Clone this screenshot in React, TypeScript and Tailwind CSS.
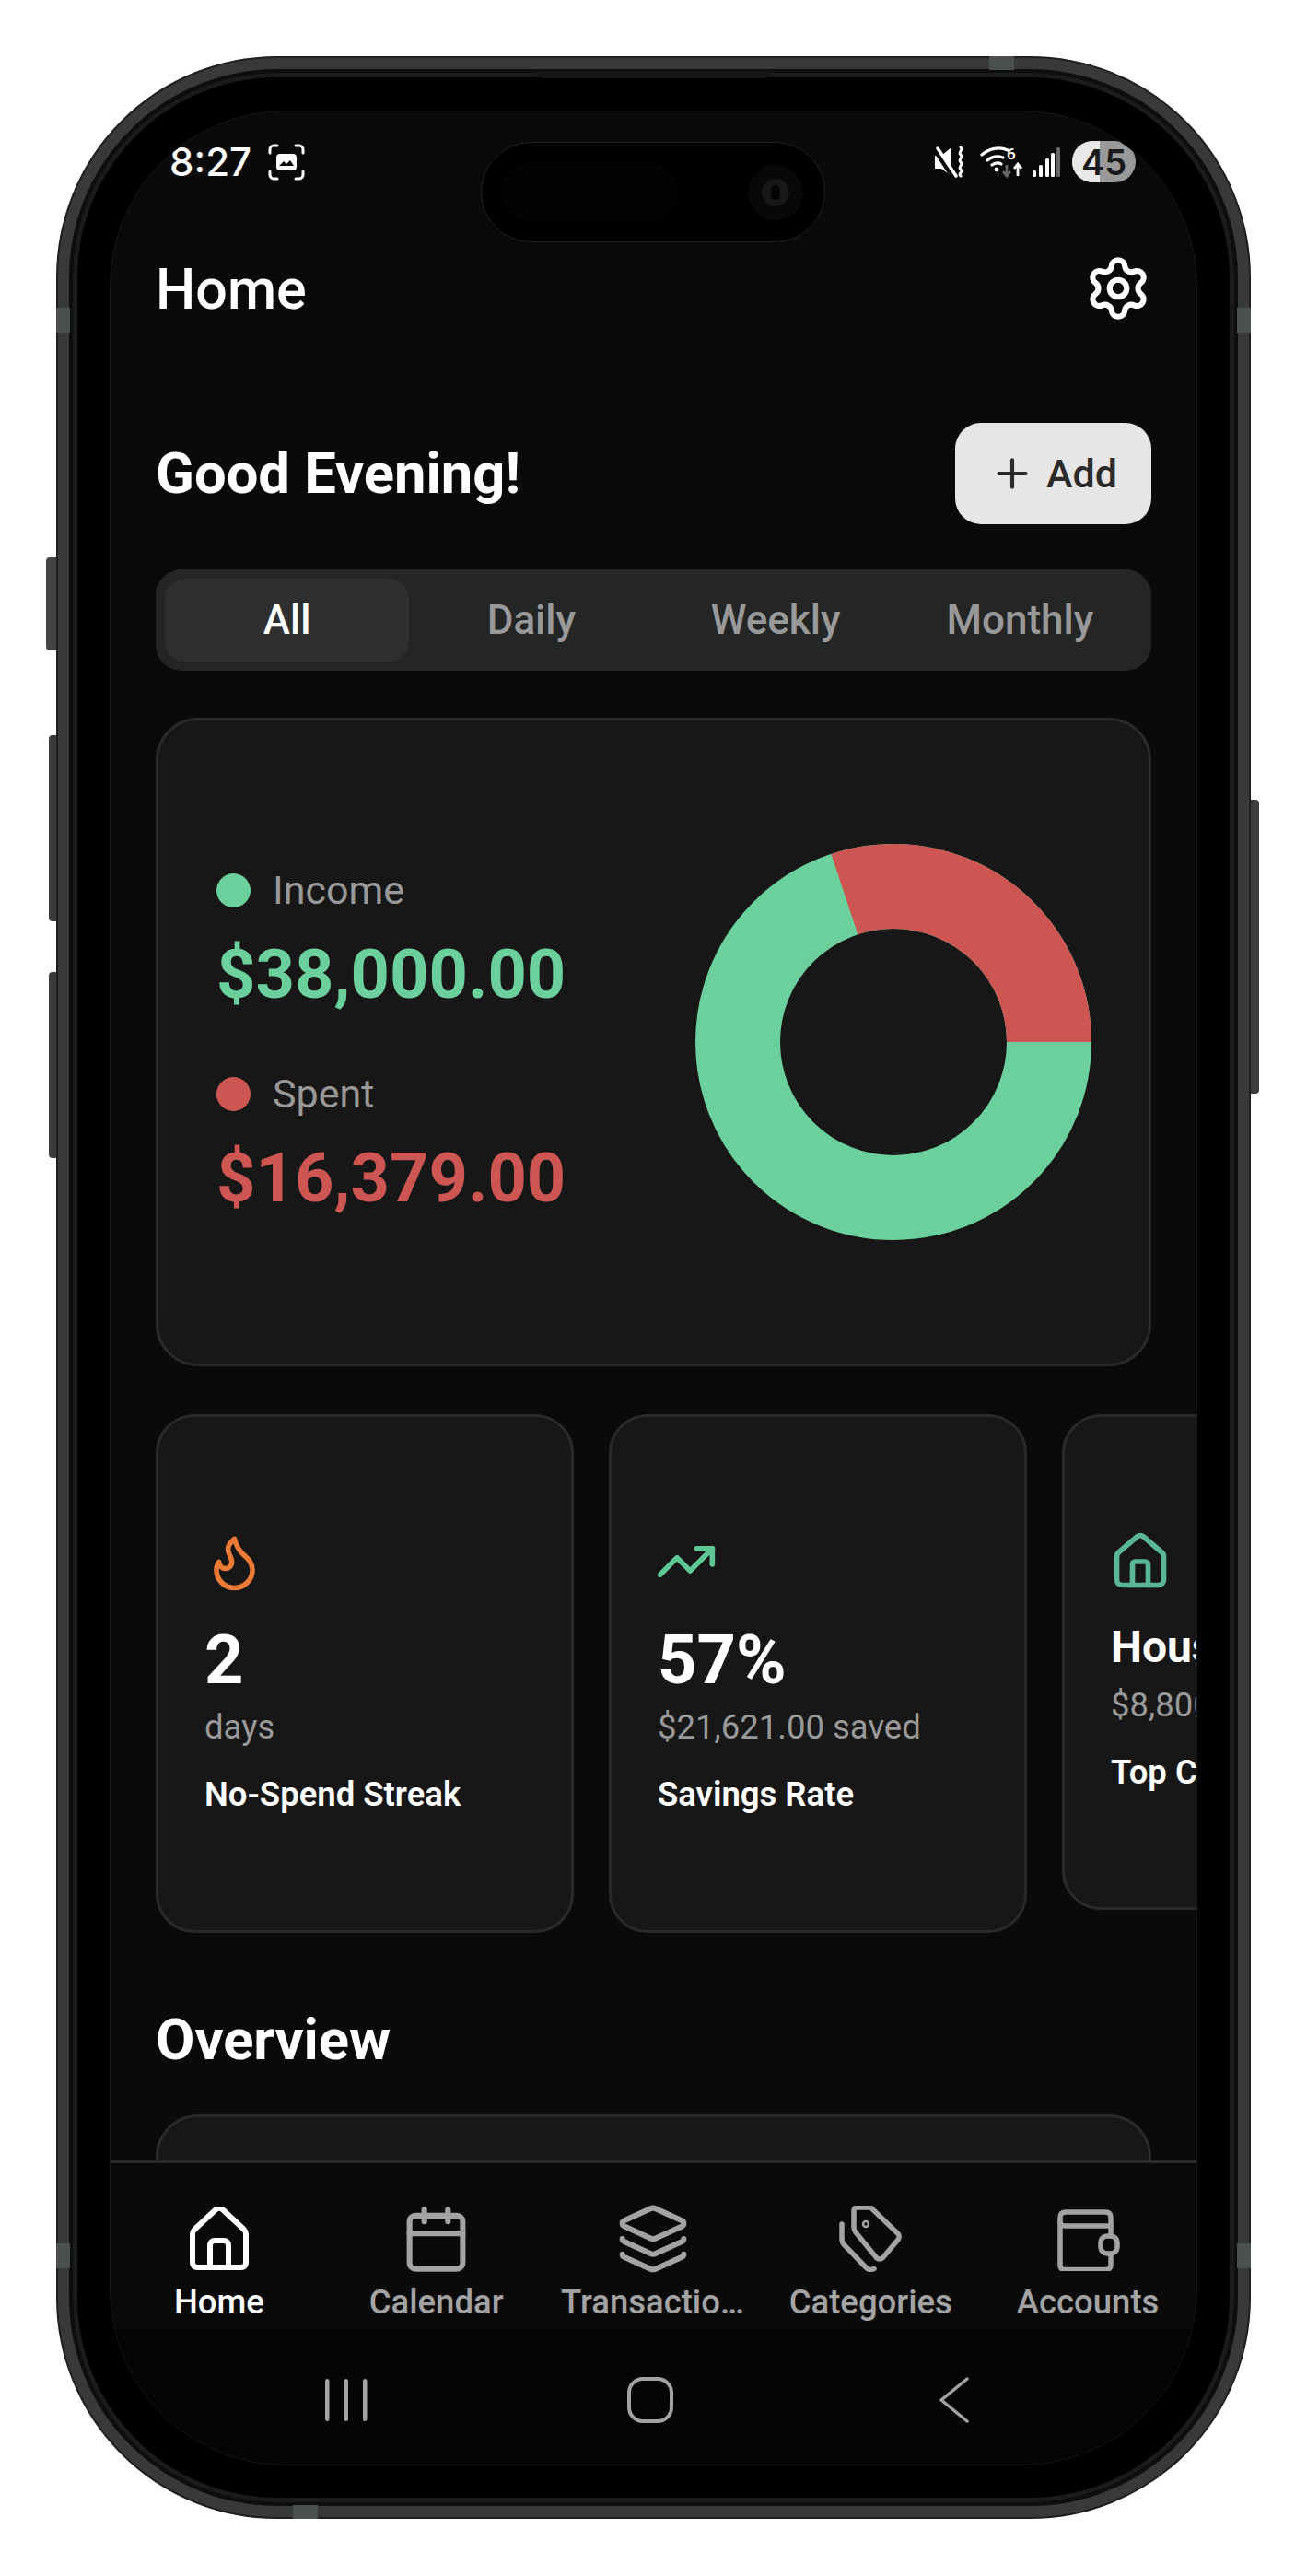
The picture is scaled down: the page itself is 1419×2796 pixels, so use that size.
import { Calendar, Flame, House, Layers, Plus, Settings, TrendingUp } from "lucide-react";
import type { ReactNode } from "react";

const tabs = ["All", "Daily", "Weekly", "Monthly"];

function StatusIcons() {
  return (
    <div className="flex items-center">
      {/* muted + vibrate */}
      <svg width="32" height="34" viewBox="0 0 32 34" fill="none" className="mr-[17px]">
        <path d="M0 10h7l11-9v31L7 24H0z" fill="#fff" />
        <path d="M-1 0l21 32" stroke="#0a0a0a" strokeWidth="7" />
        <path d="M3 2l20 30" stroke="#fff" strokeWidth="3.500" strokeLinecap="round" />
        <path d="M28 1c3.500 3-3.500 5 0 8s-3.500 5 0 8-3.500 5 0 8-3.500 4 0 7" stroke="#fff" strokeWidth="3" strokeLinecap="round" />
      </svg>
      {/* wifi */}
      <svg width="46" height="36" viewBox="0 0 46 36" fill="none" className="mr-[11px]">
        <path d="M2 10c8-7 19-9 28-5" stroke="#fff" strokeWidth="3.200" strokeLinecap="round" />
        <path d="M8 16c5-4 11-5 17-3" stroke="#fff" strokeWidth="3.200" strokeLinecap="round" />
        <path d="M13 21c3-2 7-3 10-1" stroke="#fff" strokeWidth="3.200" strokeLinecap="round" />
        <circle cx="18" cy="26" r="2.400" fill="#fff" />
        <text x="29" y="15" fontSize="17" fontWeight="600" fill="#fff" fontFamily="Roboto, sans-serif">6</text>
        <path d="M29 21v11m-4-4 4 5 4-5" stroke="#666" strokeWidth="2.800" />
        <path d="M41 33V21m-4 4 4-5 4 5" stroke="#fff" strokeWidth="2.800" />
      </svg>
      {/* signal */}
      <svg width="30" height="32" viewBox="0 0 30 32" className="mr-[13px]">
        <rect x="0" y="25" width="4" height="7" rx="1.500" fill="#fff" />
        <rect x="7" y="19" width="4" height="13" rx="1.500" fill="#fff" />
        <rect x="14" y="12" width="4" height="20" rx="1.500" fill="#fff" />
        <rect x="20" y="6" width="4" height="26" rx="1.500" fill="#fff" />
        <rect x="26" y="0" width="4" height="32" rx="1.500" fill="#666" />
      </svg>
      {/* battery */}
      <div className="relative flex h-[45px] w-[69px] items-center justify-center overflow-hidden rounded-full bg-[#999]">
        <div className="absolute inset-y-0 left-0 w-[30px] bg-[#e8e8e8]" />
        <span className="relative [font-family:Inter,sans-serif] text-[38px] leading-none font-semibold text-[#1a1a1a]">45</span>
      </div>
    </div>
  );
}

function Cutout() {
  return (
    <div className="absolute top-[33px] left-[402px] flex h-[109px] w-[374px] items-center rounded-full border border-[#222] bg-black">
      <div className="ml-[22px] h-[65px] w-[192px] rounded-full bg-[#030303]" />
      <div className="ml-[75px] flex h-[60px] w-[60px] items-center justify-center rounded-full bg-[#080808]">
        <div className="h-[30px] w-[30px] rounded-full bg-[#181818] pt-[7px]">
          <div className="mx-auto h-[16px] w-[10px] rounded-full bg-[#050505]" />
        </div>
      </div>
    </div>
  );
}

function Donut() {
  const r = 169;
  const c = 2 * Math.PI * r;
  const spent = (16379 / (38000 + 16379)) * c;
  return (
    <svg width="430" height="430" viewBox="0 0 430 430" className="shrink-0">
      <circle cx="215" cy="215" r={r} fill="none" stroke="#6cd09d" strokeWidth="92" />
      <circle
        cx="215"
        cy="215"
        r={r}
        fill="none"
        stroke="#cd5653"
        strokeWidth="92"
        strokeDasharray={`${spent} ${c - spent}`}
        strokeDashoffset={spent}
      />
    </svg>
  );
}

function LegendRow({ label, value, dot, text }: { label: string; value: string; dot: string; text: string }) {
  return (
    <div>
      <div className="flex h-[50px] items-center">
        <span className={`h-[37px] w-[37px] rounded-full ${dot}`} />
        <span className="ml-[24px] text-[43px] text-[#999]">{label}</span>
      </div>
      <div className={`mt-[25px] text-[74px] leading-[84px] font-bold ${text}`}>{value}</div>
    </div>
  );
}

function StatCard({
  icon,
  value,
  sub,
  label,
  className,
  valueClass,
}: {
  icon: ReactNode;
  value: string;
  sub: string;
  label: string;
  className: string;
  valueClass: string;
}) {
  return (
    <div className={`w-[454px] shrink-0 overflow-hidden rounded-[42px] border-[3px] border-[#2a2a2a] bg-[#171717] pt-[122px] pl-[50px] ${className}`}>
      <div className="flex h-[70px] items-center">{icon}</div>
      <div className={`font-bold whitespace-nowrap text-white ${valueClass}`}>{value}</div>
      <div className="text-[36.500px] leading-[50px] whitespace-nowrap text-[#999]">{sub}</div>
      <div className="mt-[26px] text-[36.500px] leading-[44px] font-semibold whitespace-nowrap text-white">{label}</div>
    </div>
  );
}

function HomeIcon() {
  return (
    <svg width="70" height="70" viewBox="0 0 70 70" fill="none" stroke="#fff" strokeWidth="6" strokeLinejoin="round" strokeLinecap="round">
      <path d="M6 30c0-2 .6-3.600 2-5L31 3.500c2.200-2 5.800-2 8 0L62 25c1.400 1.400 2 3 2 5v31c0 3-2 5-5 5H11c-3 0-5-2-5-5z" />
      <path d="M25 66V42c0-3 2-5 5-5h10c3 0 5 2 5 5v24" />
    </svg>
  );
}

function TagsIcon() {
  return (
    <svg width="72" height="72" viewBox="0 0 72 72" fill="none" stroke="#a3a3a3" strokeWidth="5.500" strokeLinejoin="round" strokeLinecap="round">
      <path d="M18 5c0-1.800 1.500-3 3-3h13c2 0 3.500 .8 4.700 2.200l27 26c1.800 2 1.800 5 0 7L50 56c-2 2.500-5.500 2.500-7.500 .5L20 29c-1.300-1.500-2-3.500-2-5.500z" />
      <circle cx="31" cy="20" r="3" strokeWidth="2.500" />
      <path d="M5 20v16c0 2.500 1 5 2.500 6.500L31 67c2.500 2.500 6 3 9 1.500" />
    </svg>
  );
}

function WalletIcon() {
  return (
    <svg width="70" height="70" viewBox="0 0 70 70" fill="none" stroke="#a3a3a3" strokeWidth="5.500" strokeLinejoin="round" strokeLinecap="round">
      <path d="M60 32V12c0-4-2-6-6-6H11C7 6 5 8 5 12v52c0 2.500 2 4.500 4.500 4.500H55c3 0 5-2 5-5V51" />
      <path d="M5 17c0 3 2 4 5 4h50" />
      <rect x="49" y="32" width="18" height="19" rx="7" />
    </svg>
  );
}

function NavItem({ icon, label, active }: { icon: ReactNode; label: string; active?: boolean }) {
  return (
    <div className="flex w-[235.8px] flex-col items-center">
      <div className="flex h-[72px] items-center justify-center">{icon}</div>
      <div
        className={`mt-[9px] w-[201px] truncate text-center text-[36.500px] leading-[48px] font-medium ${active ? "text-white" : "text-[#a3a3a3]"}`}
      >
        {label}
      </div>
    </div>
  );
}

function Band({ className }: { className: string }) {
  return <div className={`absolute bg-[#4a5050] ${className}`} />;
}

export default function App() {
  return (
    <div className="relative h-[2796px] w-[1419px] overflow-hidden bg-white pt-[61px] pl-[61px] [font-family:Roboto,sans-serif]">
      <div className="relative h-[2673px] w-[1297px]">
        {/* side buttons */}
        <div className="absolute top-[544px] left-[-11px] h-[101px] w-[14px] rounded-l-[4px] bg-[#444]" />
        <div className="absolute top-[737px] left-[-8px] h-[202px] w-[10px] rounded-l-[4px] bg-[#3c3c3c]" />
        <div className="absolute top-[994px] left-[-8px] h-[202px] w-[10px] rounded-l-[4px] bg-[#3c3c3c]" />
        <div className="absolute top-[807px] right-[-9px] h-[319px] w-[11px] rounded-r-[4px] bg-[#3c3c3c]" />

        {/* body */}
        <div className="relative h-full rounded-[240px] border-2 border-[#1e1f1f] bg-[#383a3a] p-[12px]">
          <div className="h-full rounded-[226px] border-4 border-[#0e0e0e] bg-black px-[41px] pt-[42px] shadow-[inset_0_0_0_5px_#1b1b1b]">
            <div className="relative flex h-[2554px] w-[1179px] flex-col overflow-hidden rounded-[190px] bg-[#0a0a0a] outline outline-[#1a1a1a]">
              <Cutout />

              <div className="flex h-[150px] items-start justify-between pt-[32px] pr-[66px] pl-[64px]">
                <div className="flex h-[45px] items-center">
                  <span className="[font-family:Inter,sans-serif] text-[42px] leading-none font-medium text-white">8:27</span>
                  <svg width="40" height="40" viewBox="0 0 40 40" fill="none" className="ml-[18px]">
                    <path d="M2 10V6c0-2 2-4 4-4h4M30 2h4c2 0 4 2 4 4v4M38 30v4c0 2-2 4-4 4h-4M10 38H6c-2 0-4-2-4-4v-4" stroke="#fff" strokeWidth="3" strokeLinecap="round" />
                    <rect x="9" y="11" width="22" height="18" rx="4" fill="#fff" />
                    <path d="M12 24l5-5 3 3 4-4 4 6z" fill="#0a0a0a" />
                  </svg>
                </div>
                <StatusIcons />
              </div>

              <div className="flex h-[84px] items-center justify-between px-[49px]">
                <h1 className="pt-[3px] text-[61px] font-medium text-white">Home</h1>
                <Settings size={74} color="#fff" strokeWidth={2} className="mr-[-1px]" />
              </div>

              <div className="mt-[104px] flex items-center justify-between px-[49px]">
                <h2 className="text-[61.500px] font-bold text-white">Good Evening!</h2>
                <button type="button" className="flex h-[110px] w-[213px] items-center justify-center gap-[12px] rounded-[28px] bg-[#e6e6e6] text-[43px] font-medium text-[#2b2b2b]">
                  <Plus size={50} strokeWidth={2} />
                  Add
                </button>
              </div>

              <div className="mx-[49px] mt-[49px] grid h-[110px] grid-cols-4 rounded-[28px] bg-[#242626] p-[10px]">
                {tabs.map((tab, i) => (
                  <div
                    key={tab}
                    className={`flex items-center justify-center rounded-[22px] text-[44px] font-medium ${i === 0 ? "bg-[#2f2f2f] text-white" : "text-[#999]"}`}
                  >
                    {tab}
                  </div>
                ))}
              </div>

              <div className="mx-[49px] mt-[51px] flex h-[704px] shrink-0 items-center justify-between rounded-[46px] border-[3px] border-[#2a2a2a] bg-[#171717] pr-[62px] pl-[63px]">
                <div className="flex flex-col gap-[62px]">
                  <LegendRow label="Income" value="$38,000.00" dot="bg-[#6cd09d]" text="text-[#6cd09d]" />
                  <LegendRow label="Spent" value="$16,379.00" dot="bg-[#cd5653]" text="text-[#cd5653]" />
                </div>
                <Donut />
              </div>

              <div className="mt-[52px] ml-[49px] flex shrink-0 items-start gap-[38px]">
                <StatCard
                  className="h-[563px]"
                  icon={<Flame size={67} color="#ea7a35" strokeWidth={2} className="ml-[-1px]" />}
                  value="2"
                  valueClass="mt-[30px] mb-[6px] text-[74px] leading-[84px]"
                  sub="days"
                  label="No-Spend Streak"
                />
                <StatCard
                  className="h-[563px]"
                  icon={<TrendingUp size={68} color="#5fc796" strokeWidth={2} className="ml-[-3px]" />}
                  value="57%"
                  valueClass="mt-[30px] mb-[6px] text-[74px] leading-[84px]"
                  sub="$21,621.00 saved"
                  label="Savings Rate"
                />
                <StatCard
                  className="h-[538px]"
                  icon={<House size={68} color="#5bb598" strokeWidth={2} className="ml-[-2px]" />}
                  value="Housing"
                  valueClass="mt-[28px] mb-[8px] text-[48px] leading-[60px]"
                  sub="$8,800.00"
                  label="Top Category"
                />
              </div>

              <h2 className="mt-[74px] ml-[49px] text-[61.500px] leading-[84px] font-bold text-white">Overview</h2>

              <div className="mx-[49px] mt-[39px] h-[200px] shrink-0 rounded-t-[46px] border-[3px] border-[#2a2a2a] bg-[#171717]" />

              {/* bottom nav, lies over the scrolled content */}
              <div className="absolute inset-x-0 bottom-0">
                <div className="flex h-[183px] border-t-[3px] border-[#2a2a2a] bg-[#0a0a0a] pt-[46px]">
                  <NavItem active label="Home" icon={<HomeIcon />} />
                  <NavItem label="Calendar" icon={<Calendar size={77} color="#a3a3a3" strokeWidth={1.900} />} />
                  <NavItem label="Transactions" icon={<Layers size={80} color="#a3a3a3" strokeWidth={1.800} />} />
                  <NavItem label="Categories" icon={<TagsIcon />} />
                  <NavItem label="Accounts" icon={<WalletIcon />} />
                </div>
                <div className="flex h-[147px] items-start justify-center bg-[#050505] pt-[52px] pr-[7px]">
                  <div className="flex w-[330px] justify-center">
                    <svg width="46" height="50" viewBox="0 0 46 50" fill="#a3a3a3">
                      <rect x="0" y="2" width="4.500" height="46" rx="2.200" />
                      <rect x="20.500" y="2" width="4.500" height="46" rx="2.200" />
                      <rect x="41" y="2" width="4.500" height="46" rx="2.200" />
                    </svg>
                  </div>
                  <div className="flex w-[330px] justify-center">
                    <svg width="50" height="50" viewBox="0 0 50 50" fill="none" stroke="#a3a3a3" strokeWidth="4">
                      <rect x="2" y="2" width="46" height="46" rx="15" />
                    </svg>
                  </div>
                  <div className="flex w-[330px] justify-center">
                    <svg width="34" height="50" viewBox="0 0 34 50" fill="none" stroke="#a3a3a3" strokeWidth="3.500" strokeLinecap="round" strokeLinejoin="round">
                      <path d="M31 2 3 25l28 23" />
                    </svg>
                  </div>
                </div>
              </div>
            </div>
          </div>
        </div>

        {/* antenna bands and speaker slit */}
        <Band className="top-[273px] left-0 h-[27px] w-[15px]" />
        <Band className="top-[273px] right-0 h-[27px] w-[15px]" />
        <Band className="top-0 left-[1013px] h-[15px] w-[27px]" />
        <Band className="bottom-0 left-[257px] h-[15px] w-[27px]" />
        <Band className="top-[2374px] left-0 h-[27px] w-[15px]" />
        <Band className="top-[2374px] right-0 h-[27px] w-[15px]" />
        <div className="absolute top-[16px] left-[521px] h-[8px] w-[255px] rounded-b-[6px] bg-[#161616]" />
      </div>
    </div>
  );
}
